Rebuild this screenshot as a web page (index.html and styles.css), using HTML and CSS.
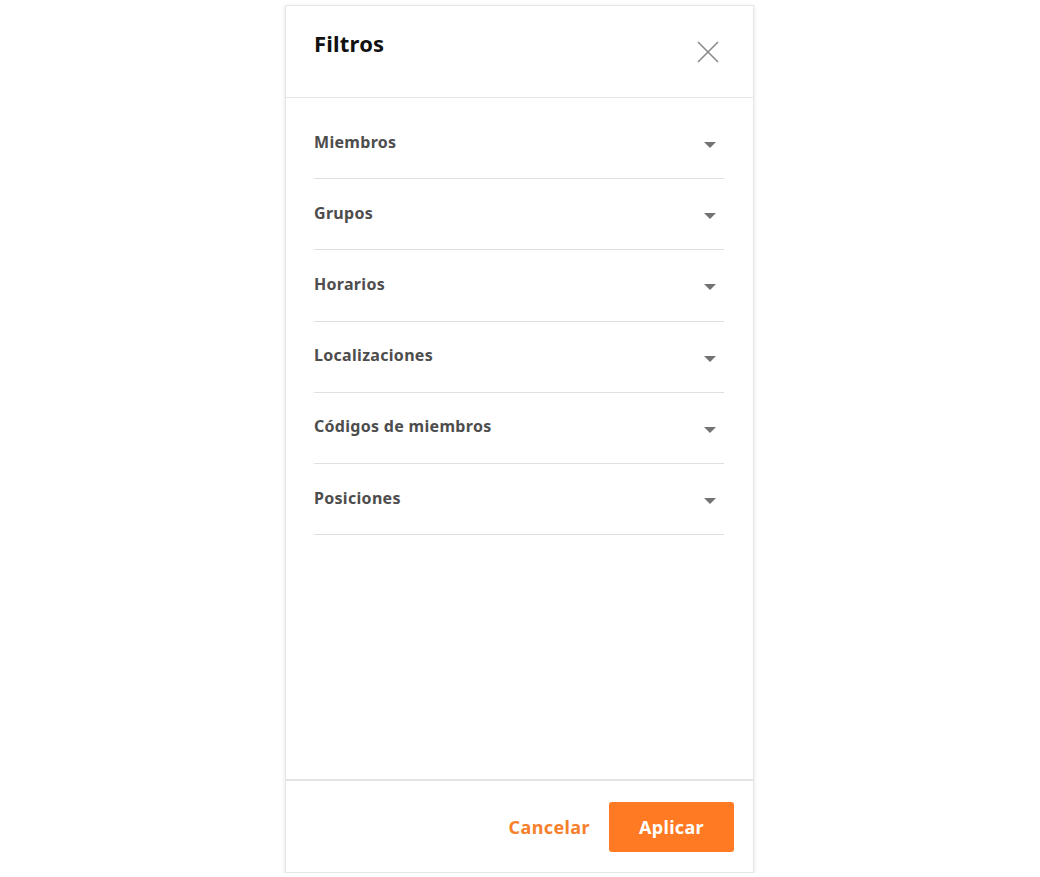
FILE: index.html
```html
<!DOCTYPE html>
<html lang="es">
<head>
<meta charset="utf-8">
<title>Filtros</title>
<link rel="stylesheet" href="styles.css">
</head>
<body>
<div class="panel">
  <header class="panel-header">
    <h1 class="panel-title">Filtros</h1>
    <button class="close-btn" aria-label="Cerrar">
      <svg width="24" height="24" viewBox="0 0 24 24"><path d="M2 2 L22 22 M22 2 L2 22" stroke="#8a8a8a" stroke-width="1.6" fill="none"/></svg>
    </button>
  </header>
  <div class="panel-body">
    <ul class="filter-list">
      <li class="filter-row"><span class="filter-label">Miembros</span><span class="caret"></span></li>
      <li class="filter-row"><span class="filter-label">Grupos</span><span class="caret"></span></li>
      <li class="filter-row"><span class="filter-label">Horarios</span><span class="caret"></span></li>
      <li class="filter-row"><span class="filter-label">Localizaciones</span><span class="caret"></span></li>
      <li class="filter-row"><span class="filter-label">Códigos de miembros</span><span class="caret"></span></li>
      <li class="filter-row"><span class="filter-label">Posiciones</span><span class="caret"></span></li>
    </ul>
  </div>
  <footer class="panel-footer">
    <button class="btn-cancel">Cancelar</button>
    <button class="btn-apply">Aplicar</button>
  </footer>
</div>
</body>
</html>
```

FILE: styles.css
```css
* { box-sizing: border-box; }
html, body { margin: 0; padding: 0; background: #fff; }
body {
  font-family: "Noto Sans", "Open Sans", "Liberation Sans", sans-serif;
  padding-top: 5px;
}
.panel {
  margin-left: 285px;
  width: 469px;
  height: 868px;
  background: #fff;
  border: 1px solid #e6e6e6;
  box-shadow: 0 1px 4px rgba(0,0,0,0.12);
  display: flex;
  flex-direction: column;
}
.panel-header {
  height: 92px;
  flex: none;
  border-bottom: 1px solid #e3e3e3;
  display: flex;
  align-items: flex-start;
  justify-content: space-between;
  padding: 0 28px 0 28px;
}
.panel-title {
  margin: 0;
  margin-top: 22px;
  font-size: 22px;
  line-height: 30px;
  font-weight: 700;
  color: #111;
  letter-spacing: 0.2px;
}
.close-btn {
  margin-top: 34px;
  margin-right: 5px;
  padding: 0;
  border: 0;
  background: none;
  width: 24px;
  height: 24px;
  display: block;
}
.close-btn svg { display: block; }
.panel-body {
  flex: 1;
  padding: 10px 29px 0 28px;
}
.filter-list {
  list-style: none;
  margin: 0;
  padding: 0;
}
.filter-row {
  height: 71.2px;
  border-bottom: 1px solid #e0e0e0;
  display: flex;
  align-items: center;
  justify-content: space-between;
  padding-right: 8px;
}
.filter-label {
  font-size: 16px;
  font-weight: 700;
  color: #4d4d4d;
  letter-spacing: 0.3px;
  margin-top: -3px;
}
.caret {
  width: 0;
  height: 0;
  border-left: 6px solid transparent;
  border-right: 6px solid transparent;
  border-top: 6px solid #737373;
  margin-top: 4px;
}
.panel-footer {
  height: 93px;
  flex: none;
  border-top: 2px solid #e3e3e3;
  display: flex;
  align-items: center;
  justify-content: flex-end;
  gap: 19px;
  padding: 0 19px 0 0;
}
.btn-cancel {
  font-family: inherit;
  border: 0;
  background: none;
  padding: 0;
  font-size: 18px;
  font-weight: 700;
  letter-spacing: 0.4px;
  color: #f7802d;
}
.btn-apply {
  font-family: inherit;
  border: 0;
  width: 125px;
  height: 50px;
  border-radius: 3px;
  background: #ff7a22;
  color: #fff;
  font-size: 18px;
  font-weight: 700;
  letter-spacing: 0.3px;
}
```
